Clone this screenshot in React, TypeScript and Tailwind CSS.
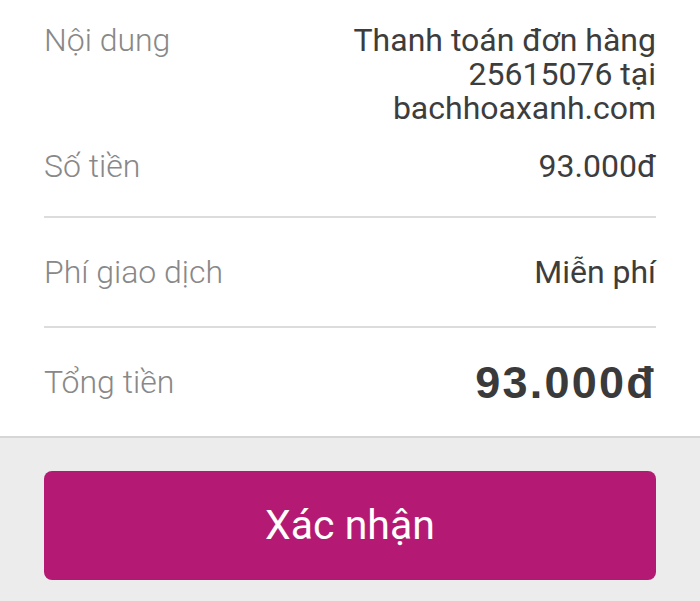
export default function App() {
  return (
    <div className="flex min-h-[601px] flex-col bg-white font-['Roboto',sans-serif]">
      <section className="px-[44px]">
        <div className="flex justify-between pt-[23px] text-[32px] leading-[34px]">
          <span className="font-light text-[#888888]">Nội dung</span>
          <span className="text-right text-[#3d3d3d]">
            Thanh toán đơn hàng
            <br />
            25615076 tại
            <br />
            bachhoaxanh.com
          </span>
        </div>
        <div className="mt-[24px] flex justify-between border-b-2 border-[#dcdcdc] pb-[33px] text-[32px] leading-[34px]">
          <span className="font-light text-[#888888]">Số tiền</span>
          <span className="text-[#3d3d3d]">93.000đ</span>
        </div>
        <div className="flex justify-between border-b-2 border-[#dcdcdc] py-[37px] text-[32px] leading-[34px]">
          <span className="font-light text-[#888888]">Phí giao dịch</span>
          <span className="text-[#3d3d3d]">Miễn phí</span>
        </div>
        <div className="flex h-[108px] items-center justify-between">
          <span className="text-[32px] font-light leading-[34px] text-[#888888]">Tổng tiền</span>
          <span className="font-['Liberation_Sans',sans-serif] text-[45px] font-bold leading-none tracking-[0.05em] text-[#3a3a3a]">
            93.000đ
          </span>
        </div>
      </section>
      <footer className="flex-1 border-t-2 border-[#d6d6d6] bg-[#ececec] px-[44px] pt-[33px]">
        <button className="flex h-[109px] w-full items-center justify-center rounded-lg bg-[#b41a73] text-[41px] text-white">
          Xác nhận
        </button>
      </footer>
    </div>
  );
}
